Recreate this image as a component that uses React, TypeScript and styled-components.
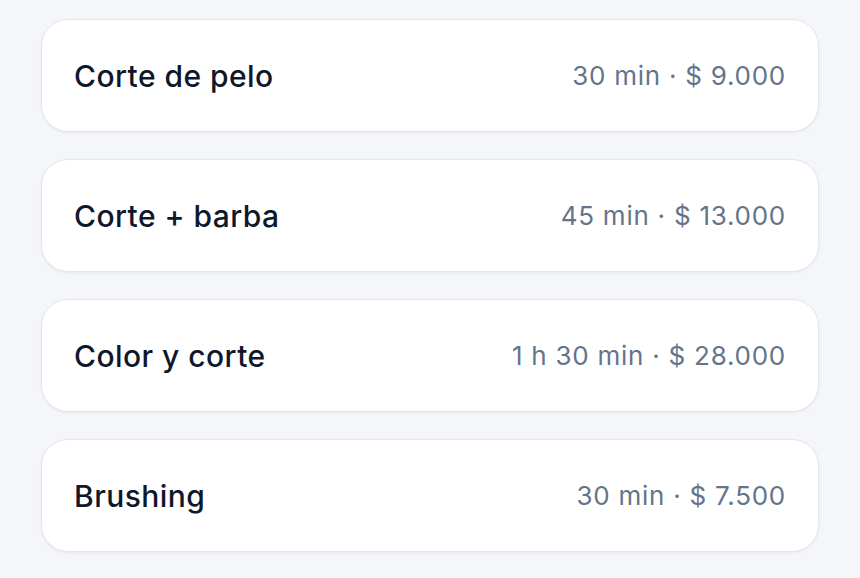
import React from "react";
import styled, { createGlobalStyle } from "styled-components";

const Global = createGlobalStyle`
  html, body { margin: 0; padding: 0; background: #f5f6fa; }
  body { font-family: Inter, "Noto Sans", sans-serif; }
`;

const Page = styled.div`
  display: flex;
  flex-direction: column;
  gap: 27px;
  padding: 19px 41px;
`;

const Card = styled.div`
  box-sizing: border-box;
  height: 113px;
  display: flex;
  align-items: center;
  justify-content: space-between;
  padding: 0 32px 0 32px;
  background: #ffffff;
  border: 1.5px solid #e3e6ee;
  border-radius: 27px;
  box-shadow: 0 1px 3px rgba(15, 23, 42, 0.06);
`;

const Name = styled.span`
  font-size: 30px;
  font-weight: 500;
  color: #0f172a;
  letter-spacing: 0.45px;
`;

const Meta = styled.span`
  font-size: 26px;
  font-weight: 400;
  color: #64748b;
  letter-spacing: 0.75px;
`;

const services = [
  { name: "Corte de pelo", meta: "30 min · $ 9.000" },
  { name: "Corte + barba", meta: "45 min · $ 13.000" },
  { name: "Color y corte", meta: "1 h 30 min · $ 28.000" },
  { name: "Brushing", meta: "30 min · $ 7.500" },
];

export default function App() {
  return (
    <>
      <Global />
      <Page>
        {services.map((s) => (
          <Card key={s.name}>
            <Name>{s.name}</Name>
            <Meta>{s.meta}</Meta>
          </Card>
        ))}
      </Page>
    </>
  );
}
